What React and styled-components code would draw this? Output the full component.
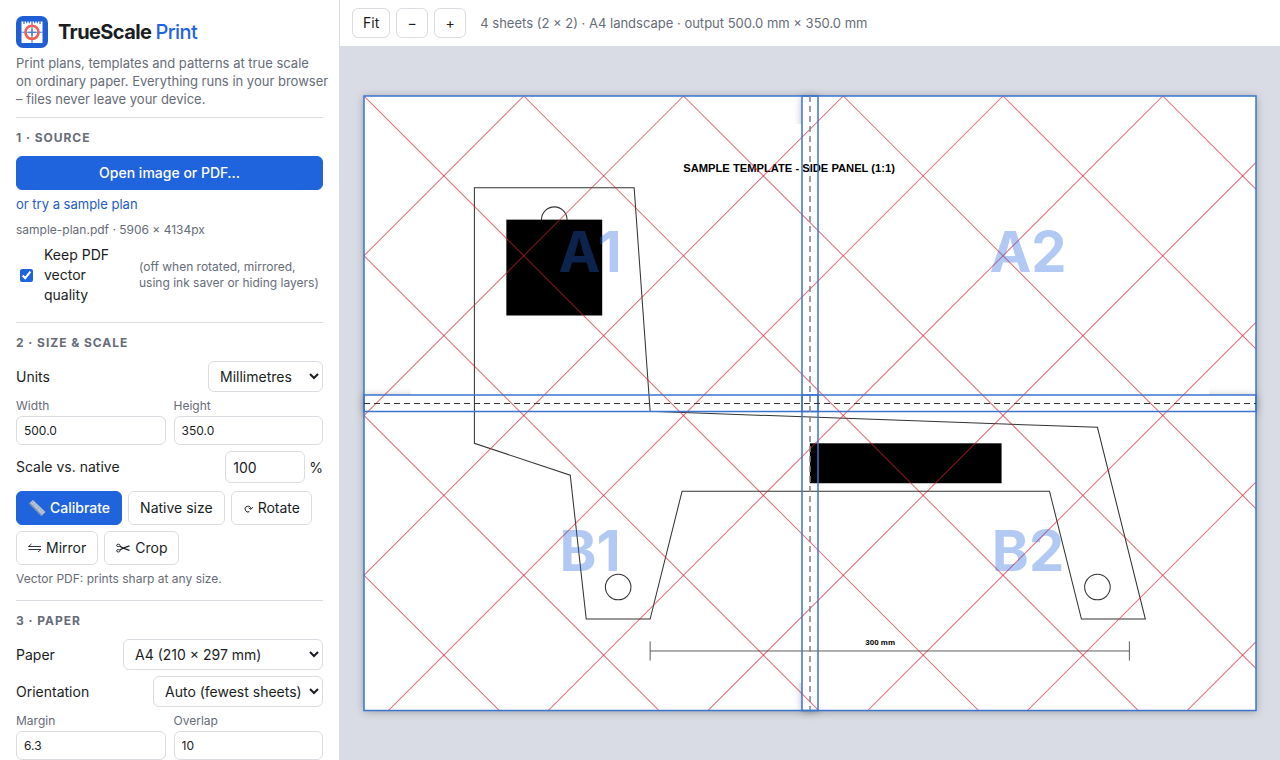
import React, { useState } from "react";
import styled, { createGlobalStyle, css } from "styled-components";

const GlobalStyle = createGlobalStyle`
  * {
    box-sizing: border-box;
  }

  body {
    margin: 0;
    font-family: Inter, "Noto Sans", sans-serif;
    font-size: 14px;
    line-height: 20px;
    color: #1a1d23;
    background: #fff;
  }

  button, input, select {
    font-family: inherit;
    color: inherit;
  }
`;

const Layout = styled.div`
  display: grid;
  grid-template-columns: 340px 1fr;
  height: 100vh;
`;

const Sidebar = styled.aside`
  padding: 16px;
  background: #fff;
  border-right: 1px solid #d9dce1;
  overflow: hidden;
`;

const Brand = styled.h1`
  display: flex;
  align-items: center;
  gap: 10px;
  margin: 0 0 6px;
  font-size: 20px;
  line-height: 32px;
  font-weight: 700;
  letter-spacing: -0.03em;

  span {
    color: #1f63dd;
    font-weight: 500;
  }
`;

const Tagline = styled.p`
  margin: 0;
  font-size: 13px;
  line-height: 18px;
  color: #666c78;
  white-space: nowrap;
`;

const Section = styled.section`
  display: flex;
  flex-direction: column;
  margin-top: ${(p) => p.$top || 16}px;
  padding-top: 12px;
  border-top: 1px solid #d9dce1;
`;

const SectionTitle = styled.h2`
  margin: 0 0 10px;
  font-size: 12px;
  line-height: 16px;
  font-weight: 700;
  letter-spacing: 0.08em;
  text-transform: uppercase;
  color: #666c78;
`;

const Button = styled.button`
  display: inline-flex;
  align-items: center;
  justify-content: center;
  gap: 4px;
  height: 34px;
  padding: 0 11px;
  border: 1px solid #d9dce1;
  border-radius: 6px;
  background: #fff;
  font-size: 14px;
  line-height: 20px;
  cursor: pointer;

  ${(p) =>
    p.$primary &&
    css`
      background: #1f63dd;
      border-color: #1f63dd;
      color: #fff;
      font-weight: 500;
    `}
`;

const SampleLink = styled.a`
  margin-top: 4px;
  font-size: 13px;
  color: #1b5cc9;
  text-decoration: none;
`;

const Hint = styled.p`
  margin: ${(p) => p.$top || 0}px 0 0;
  font-size: 12px;
  line-height: 16px;
  color: #666c78;
`;

const CheckRow = styled.label`
  display: grid;
  grid-template-columns: 20px 87px 1fr;
  align-items: center;
  column-gap: 8px;
  margin-top: 7px;

  input {
    width: 13px;
    height: 13px;
    margin: 0 4px;
    accent-color: #1f63dd;
  }

  small {
    font-size: 12px;
    line-height: 16px;
    color: #666c78;
    white-space: nowrap;
  }
`;

const Row = styled.div`
  display: flex;
  align-items: center;
  justify-content: space-between;
  margin-bottom: 6px;
`;

const Select = styled.select`
  height: 31px;
  width: ${(p) => p.$width}px;
  padding: 0 0 0 7px;
  border: 1px solid #d9dce1;
  border-radius: 6px;
  background: #fff;
  font-size: 14px;
`;

const FieldPair = styled.div`
  display: grid;
  grid-template-columns: 1fr 1fr;
  gap: 8px;
`;

const Field = styled.label`
  display: flex;
  flex-direction: column;
  font-size: 12px;
  line-height: 16px;
  gap: 2px;
  color: #666c78;
`;

const Input = styled.input`
  width: 100%;
  height: 29px;
  padding: 0 7px;
  border: 1px solid #d9dce1;
  border-radius: 6px;
  background: #fff;
  font-size: 12px;
  color: #1a1d23;
`;

const ScaleRow = styled(Row)`
  margin: 6px 0 8px;
`;

const ScaleInput = styled(Input)`
  width: 80px;
  height: 32px;
  margin-right: 4px;
  font-size: 14px;
`;

const ButtonRow = styled.div`
  display: flex;
  flex-wrap: wrap;
  gap: 6px;
`;

const Main = styled.main`
  display: flex;
  flex-direction: column;
  min-width: 0;
  min-height: 0;
`;

const Toolbar = styled.div`
  display: flex;
  align-items: center;
  gap: 6px;
  padding: 8px 12px;
  border-bottom: 1px solid #d9dce1;
  background: #fff;
`;

const ZoomButton = styled(Button)`
  height: 30px;
  min-width: 32px;
  padding: 0 10px;
`;

const Status = styled.span`
  margin-left: 8px;
  font-size: 13px;
  color: #666c78;
`;

const Viewport = styled.div`
  flex: 1;
  min-height: 0;
  display: flex;
  align-items: center;
  justify-content: center;
  padding: 24px;
  background: #d9dce4;
`;

const Preview = styled.svg`
  display: block;
  width: 100%;
  max-height: 100%;
  overflow: visible;

  .page {
    fill: #fff;
    filter: drop-shadow(0 1px 4px rgba(0, 0, 0, 0.3));
  }

  .edge {
    fill: none;
    stroke: #3a74cf;
    stroke-width: 1.5;
  }

  .hatch {
    stroke: rgba(205, 35, 50, 0.65);
    stroke-width: 1.01;
  }

  .label {
    fill: rgba(31, 99, 221, 0.35);
    font-size: 56px;
    font-weight: 700;
    text-anchor: middle;
  }

  .note {
    fill: #000;
    font-family: "Liberation Sans", Arial, sans-serif;
    font-weight: 700;
    text-anchor: middle;
  }
`;

function LogoIcon() {
  return (
    <svg width="32" height="32" viewBox="0 0 32 32" aria-hidden="true">
      <rect width="32" height="32" rx="7" fill="#1f5fd6" />
      <rect x="5.5" y="5.5" width="21" height="21.5" fill="#fff" />
      <path
        d="M8 5v3M10.7 5v2.2M13.3 5v2.2M16 5v3M18.7 5v2.2M21.3 5v2.2M24 5v3"
        stroke="#1f5fd6"
        strokeWidth="1.1"
      />
      <path d="M16 8v19M5.5 16.3h21" stroke="#4d80dc" strokeWidth="1.1" />
      <circle cx="16" cy="16.3" r="6.6" fill="none" stroke="#ee5f58" strokeWidth="2.6" />
      <path d="M16 12.5v7.6M12.2 16.3h7.6" stroke="#4d80dc" strokeWidth="1.3" />
    </svg>
  );
}

function RulerIcon() {
  return (
    <svg width="18" height="18" viewBox="0 0 18 18" aria-hidden="true">
      <path d="M1 4.5 5 1l12.5 12-4.2 4z" fill="#b9c6d6" />
      <path d="M1 4.5 13.3 17l1-1L2 3.6z" fill="#8294ab" />
      <path
        d="m5.5 2.5-1.4 1.3M7.5 4.4 5.7 6M9.5 6.3 8.1 7.6M11.5 8.2 9.7 9.8M13.5 10.1l-1.4 1.3M15.5 12l-1.8 1.6"
        stroke="#77889d"
        strokeWidth=".7"
      />
    </svg>
  );
}

function RotateIcon() {
  return (
    <svg width="11" height="16" viewBox="0 0 11 16" fill="none" stroke="currentColor" aria-hidden="true">
      <path d="M6.4 11.7A2.9 2.9 0 1 1 7.9 8.6" />
      <path d="M5.6 7.8 7.9 9.4l1.9-2.2" />
    </svg>
  );
}

function MirrorIcon() {
  return (
    <svg width="14" height="16" viewBox="0 0 14 16" fill="none" stroke="currentColor" aria-hidden="true">
      <path d="M13 6.5H.5L3.5 4M.5 9.5H13L10 12" strokeWidth=".9" />
    </svg>
  );
}

function ScissorsIcon() {
  return (
    <svg width="15" height="16" viewBox="0 0 15 16" fill="none" stroke="currentColor" aria-hidden="true">
      <ellipse cx="2.3" cy="5.4" rx="1.7" ry="1.2" strokeWidth=".9" />
      <ellipse cx="2.3" cy="10.8" rx="1.7" ry="1.2" strokeWidth=".9" />
      <path d="m3.8 6.2 3.4 1.9 6.3-2.3M3.8 10l3.4-1.9 6.3 2.3" strokeWidth="1.3" />
    </svg>
  );
}

const SHEETS = [
  { id: "A1", x: 0, y: 0 },
  { id: "A2", x: 438, y: 0 },
  { id: "B1", x: 0, y: 299 },
  { id: "B2", x: 438, y: 299 },
];

const SHEET_W = 454;
const SHEET_H = 315.5;
const GRID = 159.75;
const HATCH = Array.from({ length: 14 }, (_, i) => (i - 4) * GRID);

function SheetPreview() {
  return (
    <Preview viewBox="0 0 892 616" role="img" aria-label="Sheet layout preview">
      <defs>
        <clipPath id="paper">
          <rect width="892" height="614.5" />
        </clipPath>
      </defs>

      {SHEETS.map((s) => (
        <rect key={s.id} className="page" x={s.x} y={s.y} width={SHEET_W} height={SHEET_H} />
      ))}

      {/* plan, in millimetres */}
      <g transform="translate(46.5 27.8) scale(1.5975)">
        <rect width="500" height="350" fill="#fff" />
        <g fill="none" stroke="#333" strokeWidth=".65">
          <path d="M40 40H140L150 180L430 190L460 310H420L400 230H170L150 310H110L100 220L40 200Z" />
          <circle cx="90" cy="60" r="8" />
          <circle cx="130" cy="290" r="8" />
          <circle cx="430" cy="290" r="8" />
          <path d="M150 330H450M150 324V336M450 324V336" strokeWidth=".5" />
        </g>
        <rect x="60" y="60" width="60" height="60" />
        <rect x="250" y="200" width="120" height="25" />
        <text className="note" x="237" y="30" fontSize="7">
          SAMPLE TEMPLATE - SIDE PANEL (1:1)
        </text>
        <text className="note" x="294" y="326" fontSize="5">
          300 mm
        </text>
      </g>

      <g clipPath="url(#paper)">
        {HATCH.map((x) => (
          <React.Fragment key={x}>
            <line className="hatch" x1={x} y1="0" x2={x + 640} y2="640" />
            <line className="hatch" x1={x} y1="0" x2={x - 640} y2="640" />
          </React.Fragment>
        ))}
      </g>

      {SHEETS.map((s) => (
        <g key={s.id}>
          <rect className="edge" x={s.x} y={s.y} width={SHEET_W} height={SHEET_H} />
          <text className="label" x={s.x + SHEET_W / 2 - 1} y={s.y + 176}>
            {s.id}
          </text>
        </g>
      ))}

      <path d="M446 0V614" stroke="#888" strokeWidth="1.6" strokeDasharray="6 4" />
      <path d="M0 307.5H892" stroke="#333" strokeWidth="1" strokeDasharray="6 4" />
    </Preview>
  );
}

function App() {
  const [vector, setVector] = useState(true);

  return (
    <>
      <GlobalStyle />
      <Layout>
        <Sidebar>
          <Brand>
            <LogoIcon />
            <div>
              TrueScale <span>Print</span>
            </div>
          </Brand>
          <Tagline>
            Print plans, templates and patterns at true scale
            <br />
            on ordinary paper. Everything runs in your browser
            <br />– files never leave your device.
          </Tagline>

          <Section $top={9}>
            <SectionTitle>1 · Source</SectionTitle>
            <Button $primary>Open image or PDF…</Button>
            <SampleLink href="#sample">or try a sample plan</SampleLink>
            <Hint $top={8}>sample-plan.pdf · 5906 × 4134px</Hint>
            <CheckRow>
              <input type="checkbox" checked={vector} onChange={(e) => setVector(e.target.checked)} />
              <span>Keep PDF vector quality</span>
              <small>
                (off when rotated, mirrored,
                <br />
                using ink saver or hiding layers)
              </small>
            </CheckRow>
          </Section>

          <Section $top={17}>
            <SectionTitle>2 · Size &amp; scale</SectionTitle>
            <Row>
              <label htmlFor="units">Units</label>
              <Select id="units" $width={115}>
                <option>Millimetres</option>
                <option>Inches</option>
              </Select>
            </Row>
            <FieldPair>
              <Field>
                Width
                <Input defaultValue="500.0" />
              </Field>
              <Field>
                Height
                <Input defaultValue="350.0" />
              </Field>
            </FieldPair>
            <ScaleRow>
              <label htmlFor="scale">Scale vs. native</label>
              <span>
                <ScaleInput id="scale" defaultValue="100" />%
              </span>
            </ScaleRow>
            <ButtonRow>
              <Button $primary>
                <RulerIcon />
                Calibrate
              </Button>
              <Button>Native size</Button>
              <Button>
                <RotateIcon />
                Rotate
              </Button>
              <Button>
                <MirrorIcon />
                Mirror
              </Button>
              <Button>
                <ScissorsIcon />
                Crop
              </Button>
            </ButtonRow>
            <Hint $top={6}>Vector PDF: prints sharp at any size.</Hint>
          </Section>

          <Section $top={13}>
            <SectionTitle>3 · Paper</SectionTitle>
            <Row>
              <label htmlFor="paper-size">Paper</label>
              <Select id="paper-size" $width={200}>
                <option>A4 (210 × 297 mm)</option>
                <option>A3 (297 × 420 mm)</option>
              </Select>
            </Row>
            <Row>
              <label htmlFor="orientation">Orientation</label>
              <Select id="orientation" $width={170}>
                <option>Auto (fewest sheets)</option>
                <option>Portrait</option>
                <option>Landscape</option>
              </Select>
            </Row>
            <FieldPair>
              <Field>
                Margin
                <Input defaultValue="6.3" />
              </Field>
              <Field>
                Overlap
                <Input defaultValue="10" />
              </Field>
            </FieldPair>
          </Section>
        </Sidebar>

        <Main>
          <Toolbar>
            <ZoomButton>Fit</ZoomButton>
            <ZoomButton aria-label="Zoom out">−</ZoomButton>
            <ZoomButton aria-label="Zoom in">+</ZoomButton>
            <Status>4 sheets (2 × 2) · A4 landscape · output 500.0 mm × 350.0 mm</Status>
          </Toolbar>
          <Viewport>
            <SheetPreview />
          </Viewport>
        </Main>
      </Layout>
    </>
  );
}

export default App;
